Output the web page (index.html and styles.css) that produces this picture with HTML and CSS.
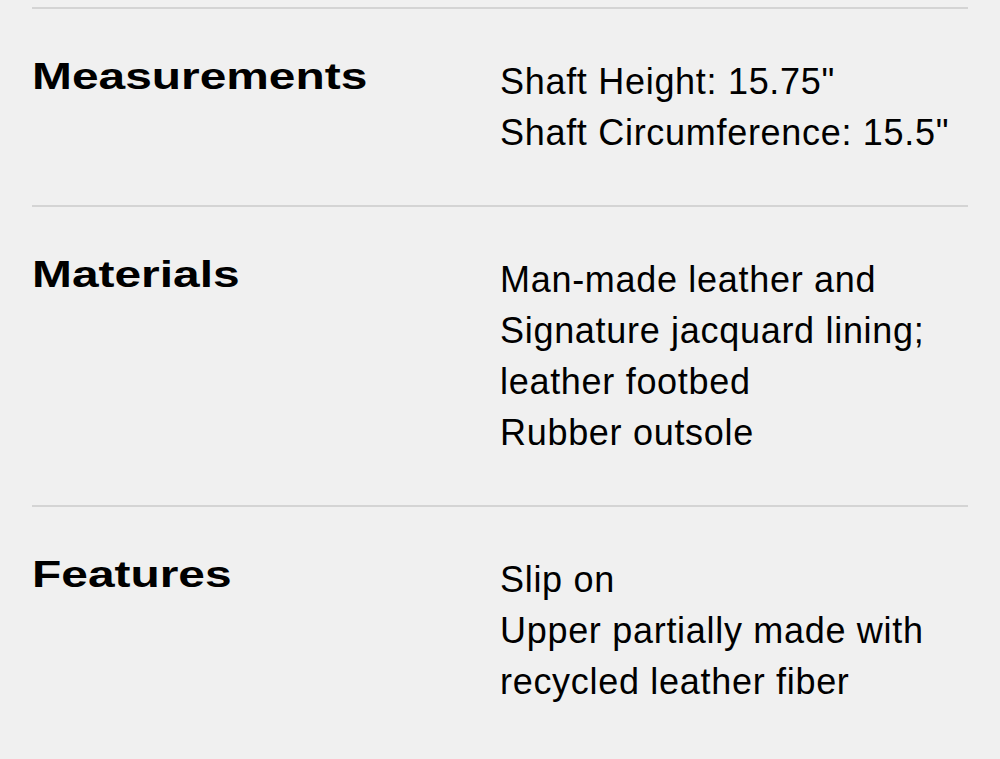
FILE: index.html
```html
<!DOCTYPE html>
<html lang="en">
<head>
<meta charset="utf-8">
<title>Product details</title>
<link rel="stylesheet" href="styles.css">
</head>
<body>
<div class="specs">
  <section class="spec">
    <h2 class="spec-title"><span>Measurements</span></h2>
    <div class="spec-values">
      <p>Shaft Height: 15.75"</p>
      <p>Shaft Circumference: 15.5"</p>
    </div>
  </section>
  <section class="spec">
    <h2 class="spec-title"><span>Materials</span></h2>
    <div class="spec-values">
      <p>Man-made leather and<br>Signature jacquard lining;<br>leather footbed</p>
      <p>Rubber outsole</p>
    </div>
  </section>
  <section class="spec">
    <h2 class="spec-title"><span>Features</span></h2>
    <div class="spec-values">
      <p>Slip on</p>
      <p>Upper partially made with<br>recycled leather fiber</p>
    </div>
  </section>
</div>
</body>
</html>
```
FILE: styles.css
```css
html, body {
  margin: 0;
  padding: 0;
  background: #f0f0f0;
}
body {
  font-family: "Liberation Sans", Arial, sans-serif;
  color: #000;
}
.specs {
  padding: 7px 32px 0;
}
.spec {
  display: grid;
  grid-template-columns: 468px 1fr;
  border-top: 2px solid #d4d4d4;
  padding: 46px 0 47px;
}
.spec-title {
  margin: 0;
  font-size: 36px;
  line-height: 1.2;
  font-weight: 700;
}
.spec-title span {
  display: inline-block;
  transform: scaleX(1.33);
  transform-origin: left center;
}
.spec-values {
  padding-top: 1px;
}
.spec-values p {
  margin: 0;
  font-size: 36px;
  line-height: 51px;
  letter-spacing: 0.7px;
}
```
